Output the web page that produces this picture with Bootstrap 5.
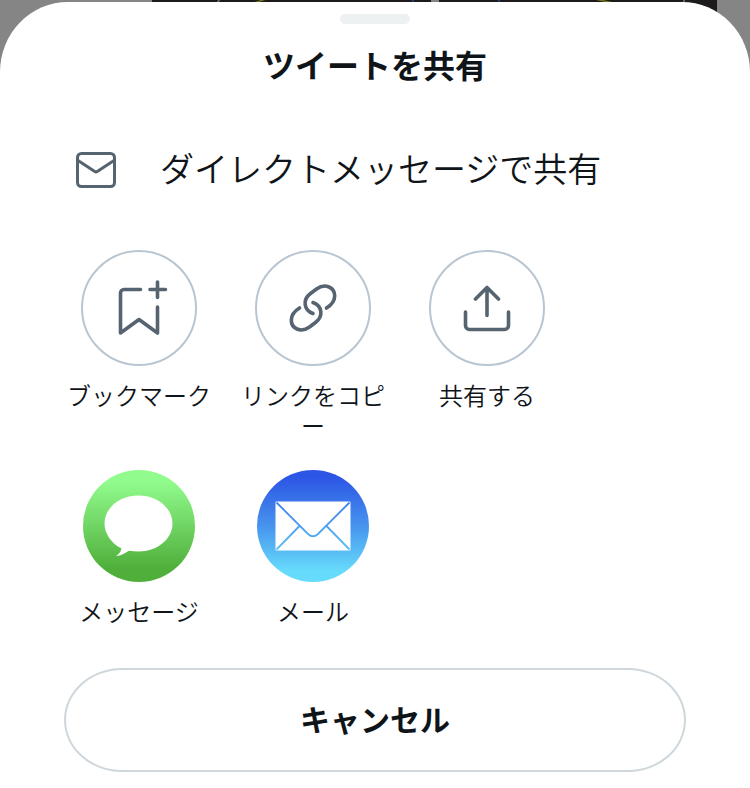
<!DOCTYPE html>
<html lang="ja">
<head>
<meta charset="utf-8">
<meta name="viewport" content="width=device-width, initial-scale=1">
<title>ツイートを共有</title>
<link href="https://cdn.jsdelivr.net/npm/bootstrap@5.3.0/dist/css/bootstrap.min.css" rel="stylesheet">
<style>
  body { background: #858585; color: #0f1419; font-family: "Noto Sans CJK JP", sans-serif; }
  .backdrop { height: 96px; z-index: 0; }
  .sheet { margin-top: 2px; padding: 12px 64px 16px; border-radius: 68px 68px 0 0 / 70px 70px 0 0; z-index: 1; }
  .grabber { width: 70px; height: 10px; background: #edf1f2; border-radius: 5px; }
  .sheet-title { font-size: 32px; line-height: 40px; margin-top: 20px; }
  .dm-row { gap: 44px; margin-top: 62px; padding-left: 12px; font-size: 34px; line-height: 44px; font-weight: 350; }
  .dm-row span { margin-bottom: 4px; }
  .line-icon { fill: none; stroke: #566370; stroke-linecap: round; stroke-linejoin: round; }
  .action-grid { column-gap: 24px; }
  .share-row { margin-top: 56px; }
  .app-row { margin-top: 28px; }
  .action { width: 150px; font-size: 24px; line-height: 30px; font-weight: 350; }
  .ring { width: 116px; height: 116px; border: 2px solid #b9c6d1; margin-bottom: 14px; }
  .app-icon { width: 112px; height: 112px; margin: 2px 0 14px; }
  .cancel { margin-top: 42px; height: 104px; border: 2px solid #cfd7dc; border-radius: 58px / 52px; font-size: 30px; padding: 0 0 4px; }
</style>
<script src="https://cdn.jsdelivr.net/npm/bootstrap@5.3.0/dist/js/bootstrap.bundle.min.js"></script>
</head>
<body>
<svg class="backdrop position-absolute top-0 start-0 w-100" viewBox="0 0 750 96" preserveAspectRatio="none" aria-hidden="true">
  <path d="M152 0h279v96H152zM439 0h278v96H439z" fill="#1c1a1b"/>
  <g fill="none" stroke-width="1.5">
    <path d="M254 3l12-4M595-1l18 4" stroke="#77751c"/>
    <path d="M217 3l3-4M683 3l2-4" stroke="#77777a"/>
    <path d="M412-1l2 4M498-1l2 4" stroke="#244c80"/>
  </g>
</svg>
<main class="sheet position-relative bg-white min-vh-100" role="dialog" aria-labelledby="sheet-title">
  <div class="grabber mx-auto"></div>
  <h1 class="sheet-title fw-bold text-center mb-0" id="sheet-title">ツイートを共有</h1>

  <button type="button" class="dm-row btn border-0 w-100 d-flex align-items-center text-start text-reset py-0 pe-0">
    <svg class="flex-shrink-0" width="40" height="36" viewBox="0 0 40 36" aria-hidden="true">
      <g class="line-icon" stroke-width="3"><rect x="1.5" y="1.5" width="37" height="33" rx="4"/><path d="M2 8.5l16.800 11q1.200.8 2.400 0L38 8.500"/></g>
    </svg>
    <span>ダイレクトメッセージで共有</span>
  </button>

  <div class="action-grid share-row d-flex flex-wrap">
    <button type="button" class="action btn border-0 p-0 text-reset d-flex flex-column align-items-center">
      <span class="ring rounded-circle d-flex align-items-center justify-content-center">
        <svg width="112" height="112" viewBox="0 0 112 112" aria-hidden="true">
          <path class="line-icon" stroke-width="3.6" d="M57.500 37.500H41a3.500 3.500 0 0 0-3.500 3.500v40L56 67.500l18.500 13.500V55M67 37.500h15.500M74.500 30v15.500"/>
        </svg>
      </span>
      <span>ブックマーク</span>
    </button>
    <button type="button" class="action btn border-0 p-0 text-reset d-flex flex-column align-items-center">
      <span class="ring rounded-circle d-flex align-items-center justify-content-center">
        <svg width="112" height="112" viewBox="0 0 112 112" aria-hidden="true">
          <path class="line-icon" stroke-width="3.6" d="M69.500 56C81 49 79 38 72 35C67.500 33 63 34.500 59.500 37L53.500 41.500C45.500 47.500 46.500 58 56 61.500M42.500 56C31 63 33 74 40 77C44.500 79 49 77.500 52.500 75L58.500 70.500C66.500 64.500 65.500 54 56 50.500"/>
        </svg>
      </span>
      <span>リンクをコピー</span>
    </button>
    <button type="button" class="action btn border-0 p-0 text-reset d-flex flex-column align-items-center">
      <span class="ring rounded-circle d-flex align-items-center justify-content-center">
        <svg width="112" height="112" viewBox="0 0 112 112" aria-hidden="true">
          <path class="line-icon" stroke-width="3.6" d="M56 63.500V36M44.500 47L56 35.500L67.500 47M34.500 60v13.500a4 4 0 0 0 4 4h35a4 4 0 0 0 4-4V60"/>
        </svg>
      </span>
      <span>共有する</span>
    </button>
  </div>

  <div class="action-grid app-row d-flex flex-wrap">
    <button type="button" class="action btn border-0 p-0 text-reset d-flex flex-column align-items-center">
      <svg class="app-icon" viewBox="0 0 112 112" aria-hidden="true">
        <defs><linearGradient id="green" x2="0" y2="1"><stop offset=".1" stop-color="#91fc8d"/><stop offset=".88" stop-color="#50af3b"/></linearGradient></defs>
        <circle cx="56" cy="56" r="56" fill="url(#green)"/>
        <path d="M55.500 25.500c19 0 34 12.500 34 28s-15 28-34 28q-5 0-9.500-.8c-4 2.500-8 5-13 5.300q4.500-3 5.500-7.500C28.500 73.500 21.500 63.500 21.500 53.500c0-15.500 15-28 34-28z" fill="#fff"/>
      </svg>
      <span>メッセージ</span>
    </button>
    <button type="button" class="action btn border-0 p-0 text-reset d-flex flex-column align-items-center">
      <svg class="app-icon" viewBox="0 0 112 112" aria-hidden="true">
        <defs>
          <linearGradient id="blue" x2="0" y2="1"><stop offset=".06" stop-color="#2c55e5"/><stop offset=".5" stop-color="#4794ee"/><stop offset=".9" stop-color="#66dbfb"/></linearGradient>
          <linearGradient id="mailfold" gradientUnits="userSpaceOnUse" x1="0" y1="31" x2="0" y2="81"><stop stop-color="#3f7deb"/><stop offset="1" stop-color="#5cc1f6"/></linearGradient>
        </defs>
        <circle cx="56" cy="56" r="56" fill="url(#blue)"/>
        <rect x="18.500" y="31.500" width="75" height="49" rx="1" fill="#fff"/>
        <path d="M19.500 32.500l31.500 31.500q5 4.500 10 0L92.500 32.500M19.500 79.500L42.500 56M92.500 79.500L69.500 56" fill="none" stroke="url(#mailfold)" stroke-width="1.800"/>
      </svg>
      <span>メール</span>
    </button>
  </div>

  <button type="button" class="cancel btn w-100 fw-bold text-reset bg-white">キャンセル</button>
</main>
</body>
</html>
